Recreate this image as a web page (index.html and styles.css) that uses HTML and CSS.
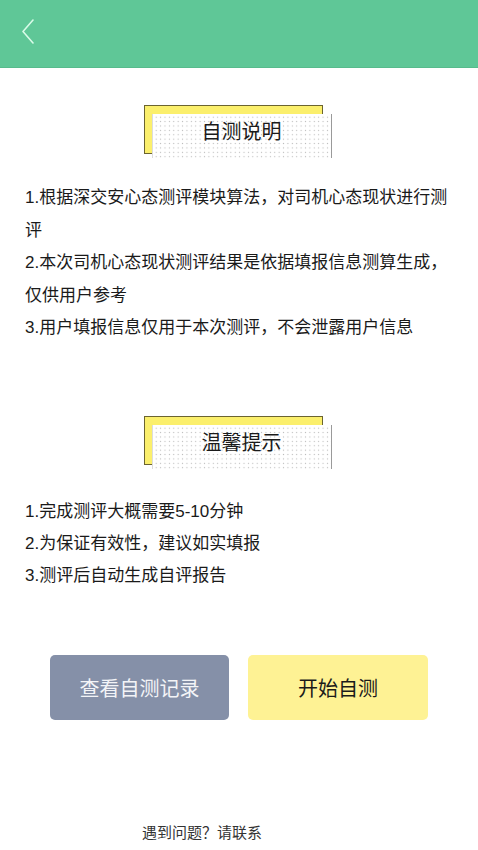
FILE: index.html
```html
<!DOCTYPE html>
<html lang="zh-CN">
<head>
    <meta charset="UTF-8">
    <meta name="viewport" content="width=device-width, initial-scale=1.0">
    <title>自测说明</title>
    <link rel="stylesheet" href="styles.css">
</head>
<body>
    <!-- Top bar -->
    <div class="topbar">
        <button class="back-btn" aria-label="返回">
            <svg width="20" height="30" viewBox="0 0 20 30">
                <polyline points="11,3 1,14.5 11,26" fill="none" stroke="#d9fbe8" stroke-width="1.6" stroke-linecap="round" stroke-linejoin="round"/>
            </svg>
        </button>
    </div>

    <!-- 自测说明 -->
    <div class="badge-wrap first">
        <div class="badge">
            <div class="badge-text">自测说明</div>
        </div>
    </div>
    <div class="notes">
        <p>1.根据深交安心态测评模块算法，对司机心态现状进行测评</p>
        <p>2.本次司机心态现状测评结果是依据填报信息测算生成，仅供用户参考</p>
        <p>3.用户填报信息仅用于本次测评，不会泄露用户信息</p>
    </div>

    <!-- 温馨提示 -->
    <div class="badge-wrap second">
        <div class="badge">
            <div class="badge-text">温馨提示</div>
        </div>
    </div>
    <div class="notes tips">
        <p>1.完成测评大概需要5-10分钟</p>
        <p>2.为保证有效性，建议如实填报</p>
        <p>3.测评后自动生成自评报告</p>
    </div>

    <div class="actions">
        <button class="btn gray">查看自测记录</button>
        <button class="btn yellow">开始自测</button>
    </div>

    <div class="footer">遇到问题？请联系</div>
</body>
</html>
```

FILE: styles.css
```css
/* Global Styles */
* {
    margin: 0;
    padding: 0;
    box-sizing: border-box;
    font-family: 'Liberation Sans', 'Noto Sans CJK SC', sans-serif;
}

body {
    background: #fff;
    color: #1a1a1a;
    width: 478px;
    min-height: 850px;
}

.topbar {
    height: 68px;
    background: #5fc797;
    border-bottom: 1px solid #57bb8c;
    display: flex;
    align-items: center;
    padding-left: 22px;
}

.back-btn {
    background: none;
    border: none;
    display: flex;
    margin-top: -3px;
}

/* Section title badge */
.badge-wrap {
    display: flex;
    justify-content: center;
    padding-right: 12px;
}

.badge-wrap.first {
    margin-top: 37px;
}

.badge-wrap.second {
    margin-top: 71px;
}

.badge {
    width: 179px;
    height: 49px;
    background: #fbef6c;
    border: 1px solid #6b6430;
}

.badge-text {
    width: 180px;
    height: 44px;
    margin: 8px -10px -5px 7px;
    background-color: #fff;
    background-image: radial-gradient(circle, #b8b8b8 0.7px, transparent 0.9px);
    background-size: 4.4px 4.4px;
    background-position: 1px 1px;
    border-left: 1px solid #dcdcdc;
    border-right: 1px solid #9a9a9a;
    text-align: center;
    font-size: 20px;
    line-height: 36px;
    color: #1a1a1a;
}

/* Notes */
.notes {
    margin-top: 28px;
    padding: 0 25px;
    font-size: 17px;
    line-height: 32.5px;
}

.notes.tips {
    margin-top: 31px;
    line-height: 32px;
}

/* Buttons */
.actions {
    margin-top: 63px;
    display: flex;
    justify-content: center;
    gap: 19px;
}

.btn {
    width: 179px;
    height: 65px;
    border: none;
    border-radius: 5px;
    font-size: 20px;
    cursor: pointer;
}

.btn.gray {
    background: #8590a8;
    color: #f3f4f7;
}

.btn.yellow {
    background: #fef294;
    color: #1a1a1a;
    width: 180px;
}

.footer {
    margin-top: 102px;
    padding-left: 142px;
    font-size: 15px;
    line-height: 22px;
    color: #333;
}
```
